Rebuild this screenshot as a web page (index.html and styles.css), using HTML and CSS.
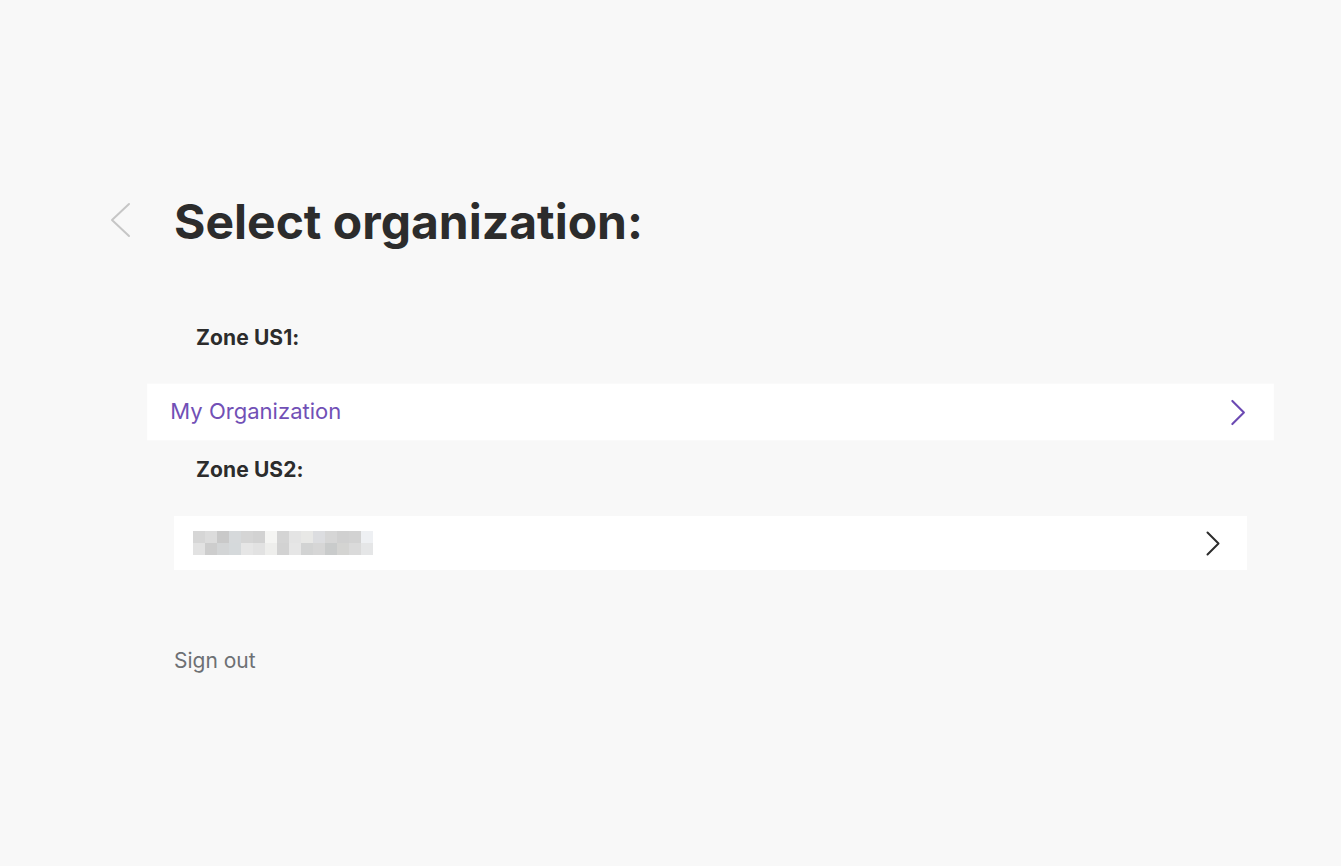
FILE: index.html
```html
<!DOCTYPE html>
<html lang="en">
<head>
<meta charset="utf-8">
<title>Select organization</title>
<link rel="stylesheet" href="styles.css">
</head>
<body>
<div class="page">
  <div class="header">
    <button class="back" aria-label="Back">
      <svg width="22" height="36" viewBox="0 0 22 36" fill="none" stroke="#c6c6c6" stroke-width="2" stroke-linecap="round" stroke-linejoin="round"><polyline points="20,2 3,18 20,34"/></svg>
    </button>
    <h1 class="title">Select organization:</h1>
  </div>
  <div class="content">
    <div class="zone-label zone-first">Zone US1:</div>
    <a class="org-row is-active" href="#">
      <span class="org-name">My Organization</span>
      <svg class="chev" width="14" height="25" viewBox="0 0 14 25" fill="none" stroke="currentColor" stroke-width="2" stroke-linecap="round" stroke-linejoin="round"><polyline points="1.5,1.5 12.5,12.5 1.5,23.5"/></svg>
    </a>
    <div class="zone-label">Zone US2:</div>
    <a class="org-row" href="#">
      <span class="redacted">
        <span></span><span></span><span></span><span></span><span></span><span></span><span></span><span></span><span></span><span></span><span></span><span></span><span></span><span></span><span></span>
        <span></span><span></span><span></span><span></span><span></span><span></span><span></span><span></span><span></span><span></span><span></span><span></span><span></span><span></span><span></span>
      </span>
      <svg class="chev" width="14" height="25" viewBox="0 0 14 25" fill="none" stroke="currentColor" stroke-width="2" stroke-linecap="round" stroke-linejoin="round"><polyline points="1.5,1.5 12.5,12.5 1.5,23.5"/></svg>
    </a>
    <a class="sign-out" href="#">Sign out</a>
  </div>
</div>
</body>
</html>
```

FILE: styles.css
```css
* { box-sizing: border-box; }
html, body {
  margin: 0;
  background: #f8f8f8;
}
body {
  font-family: Inter, "Noto Sans", "Liberation Sans", sans-serif;
  color: #2c2c2c;
  min-height: 866px;
}
.page {
  padding: 192px 0 0 109px;
}
.header {
  display: flex;
  align-items: center;
}
.back {
  width: 65px;
  padding: 0;
  margin: 0 0 5px 0;
  border: 0;
  background: none;
  display: flex;
  align-items: center;
  justify-content: flex-start;
  cursor: pointer;
}
.back svg { display: block; }
.title {
  margin: 0;
  font-size: 48px;
  line-height: 60px;
  font-weight: 700;
  color: #2c2c2c;
}
.content {
  margin-left: 65px;
  width: 1073px;
  display: flex;
  flex-direction: column;
  align-items: stretch;
}
.zone-label {
  font-size: 21px;
  line-height: 24px;
  font-weight: 700;
  padding-left: 22px;
  margin: 19px 0 34px;
  color: #2c2c2c;
  letter-spacing: 0.1px;
}
.zone-first { margin-top: 74px; margin-bottom: 35px; }
.org-row {
  height: 54px;
  background: #ffffff;
  display: flex;
  align-items: center;
  justify-content: space-between;
  padding: 0 27px 0 20px;
  text-decoration: none;
  color: #2c2c2c;
}
.org-row.is-active {
  color: #6c4ab3;
  padding-left: 22px;
  transform: scale(1.05);
}
.org-name {
  font-size: 21px;
  line-height: 24px;
  color: #7150b6;
}
.chev { display: block; }
.redacted {
  display: grid;
  grid-template-columns: repeat(15, 12px);
  grid-auto-rows: 12px;
  margin-left: -1px;
}
.redacted span:nth-child(1) { background: #d6d6d6; }
.redacted span:nth-child(2) { background: #dcdcdc; }
.redacted span:nth-child(3) { background: #c9c9c9; }
.redacted span:nth-child(4) { background: #d6d9db; }
.redacted span:nth-child(5) { background: #d5d5d5; }
.redacted span:nth-child(6) { background: #d2d2d2; }
.redacted span:nth-child(7) { background: #f5f5f3; }
.redacted span:nth-child(8) { background: #d4d4d4; }
.redacted span:nth-child(9) { background: #e4e4e4; }
.redacted span:nth-child(10) { background: #e8e8e6; }
.redacted span:nth-child(11) { background: #dcdde0; }
.redacted span:nth-child(12) { background: #d6d6d6; }
.redacted span:nth-child(13) { background: #d0d0d0; }
.redacted span:nth-child(14) { background: #d2d2d2; }
.redacted span:nth-child(15) { background: #eef0f3; }
.redacted span:nth-child(16) { background: #e2e2e2; }
.redacted span:nth-child(17) { background: #cdcdcd; }
.redacted span:nth-child(18) { background: #d3d5d6; }
.redacted span:nth-child(19) { background: #d5d9db; }
.redacted span:nth-child(20) { background: #e6e6e6; }
.redacted span:nth-child(21) { background: #e2e2e2; }
.redacted span:nth-child(22) { background: #eeeeec; }
.redacted span:nth-child(23) { background: #d2d2d2; }
.redacted span:nth-child(24) { background: #e6e6e6; }
.redacted span:nth-child(25) { background: #d2d3d3; }
.redacted span:nth-child(26) { background: #d6d6d6; }
.redacted span:nth-child(27) { background: #c9cbcb; }
.redacted span:nth-child(28) { background: #d4d4d2; }
.redacted span:nth-child(29) { background: #dadada; }
.redacted span:nth-child(30) { background: #e5e6e7; }
.sign-out {
  align-self: flex-start;
  margin-top: 79px;
  font-size: 21px;
  line-height: 24px;
  color: #6d7074;
  text-decoration: none;
}
```
